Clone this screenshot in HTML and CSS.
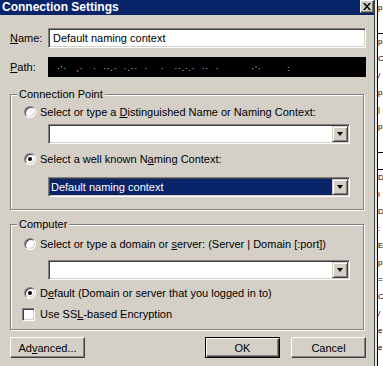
FILE: index.html
```html
<!DOCTYPE html>
<html>
<head>
<meta charset="utf-8">
<link rel="stylesheet" href="styles.css">
</head>
<body>
<div class="screen">
  <div class="dialog">
    <div class="titlebar">
      <span class="title">Connection Settings</span>
      <span class="close"><svg width="8" height="7" viewBox="0 0 8 7"><path d="M0 0h2l2 2.5L6 0h2L5 3.5 8 7H6L4 4.5 2 7H0l3-3.5z" fill="#000"/></svg></span>
    </div>
    <div class="body">
      <div class="field">
        <span class="lbl"><u>N</u>ame:</span>
        <div class="input">Default naming context</div>
      </div>
      <div class="field field-path">
        <span class="lbl"><u>P</u>ath:</span>
        <div class="input path"><span class="specks">·'·   ,·   ·  ··.·  ·.··  ·    ·   ··.·.·  ··  ·          ·'·        :</span></div>
      </div>

      <fieldset class="group g1">
        <legend>Connection Point</legend>
        <div class="opt opt1"><span class="radio"></span><span class="txt">Select or type a <u>D</u>istinguished Name or Naming Context:</span></div>
        <div class="combo c1"><div class="combo-val"></div><div class="combo-btn"><span class="tri"></span></div></div>
        <div class="opt opt2"><span class="radio on"></span><span class="txt">Select a well known N<u>a</u>ming Context:</span></div>
        <div class="combo c2"><div class="combo-val sel">Default naming context</div><div class="combo-btn"><span class="tri"></span></div></div>
      </fieldset>

      <fieldset class="group g2">
        <legend>Computer</legend>
        <div class="opt opt3"><span class="radio"></span><span class="txt">Select or type a domain or <u>s</u>erver: (Server | Domain [:port])</span></div>
        <div class="combo c3"><div class="combo-val"></div><div class="combo-btn"><span class="tri"></span></div></div>
        <div class="opt opt4"><span class="radio on"></span><span class="txt">D<u>e</u>fault (Domain or server that you logged in to)</span></div>
        <div class="opt opt5"><span class="check"></span><span class="txt">Use SS<u>L</u>-based Encryption</span></div>
      </fieldset>

      <div class="buttons">
        <div class="btn"><span>Ad<u>v</u>anced...</span></div>
        <div class="spacer"></div>
        <div class="btn default"><span>OK</span></div>
        <div class="btn"><span>Cancel</span></div>
      </div>
    </div>
  </div>
  <div class="strip">
    <div class="sl">p</div>
    <div class="sl rule"></div>
    <div class="sl">p</div>
    <div class="sl">C</div>
    <div class="sl">/</div>
    <div class="sl">p</div>
    <div class="sl">|</div>
    <div class="sl">p</div>
    <div class="sl rule"></div>
    <div class="sl rule"></div>
    <div class="sl">D</div>
    <div class="sl">i</div>
    <div class="sl">D</div>
    <div class="sl">:</div>
    <div class="sl">E</div>
    <div class="sl">p</div>
    <div class="sl">=</div>
    <div class="sl">C</div>
    <div class="sl">/</div>
    <div class="sl">e</div>
    <div class="sl">e</div>
  </div>
</div>
</body>
</html>
```

FILE: styles.css
```css
html, body {
  margin: 0;
  padding: 0;
  background: #fff;
}
body {
  font-family: "Liberation Sans", Arial, sans-serif;
  font-size: 11px;
  color: #000;
}
u { text-decoration: underline; text-underline-offset: 1px; }

.screen {
  display: flex;
  width: 383px;
  height: 366px;
  overflow: hidden;
}
.dialog {
  width: 374px;
  flex: none;
  background: #d4d0c8;
  border-right: 1px solid #404040;
  display: flex;
  flex-direction: column;
}
.titlebar {
  height: 15px;
  flex: none;
  background: #0a246a;
  display: flex;
  align-items: flex-start;
  justify-content: space-between;
  padding-left: 2px;
}
.title {
  color: #fff;
  font-weight: bold;
  font-size: 12px;
  line-height: 14px;
}
.close {
  width: 12px;
  height: 11px;
  background: #d4d0c8;
  border: 1px solid;
  border-color: #fff #404040 #404040 #fff;
  box-shadow: inset -1px -1px 0 #808080;
  display: flex;
  align-items: center;
  justify-content: center;
}

.body {
  padding: 0 8px 0 10px;
  display: flex;
  flex-direction: column;
}
.field {
  display: flex;
  align-items: center;
  margin-top: 13px;
  height: 20px;
}
.field-path { margin-top: 9px; }
.lbl {
  width: 38px;
  flex: none;
}
.input {
  box-sizing: border-box;
  width: 319px;
  height: 20px;
  background: #fff;
  border: 1px solid;
  border-color: #808080 #fff #fff #808080;
  box-shadow: inset 1px 1px 0 #404040, inset -1px -1px 0 #d4d0c8;
  padding: 0 4px;
  line-height: 18px;
  white-space: nowrap;
  overflow: hidden;
}
.path {
  background: #000;
  box-shadow: none;
  border-color: #000;
}
.specks {
  color: #fff;
  font-size: 8px;
  letter-spacing: 1px;
  white-space: pre;
  padding-left: 4px;
}

.group {
  margin: 0;
  padding: 0 0 12px 0;
  border: 1px solid #808080;
  box-shadow: inset 1px 1px 0 #fff, 1px 1px 0 #fff;
  width: 354px;
  box-sizing: border-box;
  min-width: 0;
}
.g1 { margin-top: 11px; }
.g2 { margin-top: 8px; padding-bottom: 8px; }
legend {
  padding: 0 2px;
  margin-left: 6px;
  line-height: 13px;
  background: #d4d0c8;
}

.opt {
  display: flex;
  align-items: center;
  height: 14px;
  white-space: nowrap;
}
.txt { white-space: pre; }
.opt1 { margin-top: 4px; }
.opt2 { margin-top: 8px; }
.opt3 { margin-top: 6px; }
.opt4 { margin-top: 6px; }
.opt5 { margin-top: 7px; }

.radio {
  width: 12px;
  height: 12px;
  margin-left: 13px;
  margin-right: 4px;
  box-sizing: border-box;
  border-radius: 50%;
  border: 1px solid;
  border-color: #808080 #fff #fff #808080;
  background: #fff;
  box-shadow: inset 1px 1px 0 #404040, inset -1px -1px 0 #d4d0c8;
  display: flex;
  align-items: center;
  justify-content: center;
  flex: none;
}
.radio.on::after {
  content: "";
  width: 4px;
  height: 4px;
  border-radius: 50%;
  background: #000;
}
.check {
  width: 13px;
  height: 13px;
  margin-left: 11px;
  margin-right: 5px;
  box-sizing: border-box;
  border: 1px solid;
  border-color: #808080 #fff #fff #808080;
  background: #fff;
  box-shadow: inset 1px 1px 0 #404040, inset -1px -1px 0 #d4d0c8;
  flex: none;
}

.combo {
  box-sizing: border-box;
  width: 302px;
  height: 20px;
  margin-left: 37px;
  background: #fff;
  border: 1px solid;
  border-color: #808080 #fff #fff #808080;
  box-shadow: inset 1px 1px 0 #404040, inset -1px -1px 0 #d4d0c8;
  padding: 1px;
  display: flex;
}
.c1 { margin-top: 5px; }
.c2 { margin-top: 11px; }
.c3 { margin-top: 9px; }
.combo-val {
  flex: 1;
  line-height: 16px;
  padding-left: 1px;
  white-space: nowrap;
}
.combo-val.sel {
  background: #0a246a;
  color: #fff;
}
.combo-btn {
  width: 16px;
  height: 16px;
  box-sizing: border-box;
  background: #d4d0c8;
  border: 1px solid;
  border-color: #d4d0c8 #404040 #404040 #d4d0c8;
  box-shadow: inset 1px 1px 0 #fff, inset -1px -1px 0 #808080;
  display: flex;
  align-items: center;
  justify-content: center;
  flex: none;
}
.tri {
  width: 0;
  height: 0;
  border-left: 3.5px solid transparent;
  border-right: 3.5px solid transparent;
  border-top: 4px solid #000;
}

.buttons {
  display: flex;
  margin-top: 7px;
  width: 356px;
}
.spacer { flex: 1; }
.btn {
  box-sizing: border-box;
  width: 75px;
  height: 21px;
  border: 1px solid;
  border-color: #fff #404040 #404040 #fff;
  box-shadow: inset -1px -1px 0 #808080;
  display: flex;
  align-items: center;
  justify-content: center;
  flex: none;
}
.btn.default {
  border: 1px solid #000;
  box-shadow: inset 1px 1px 0 #fff, inset -1px -1px 0 #404040, inset -2px -2px 0 #808080;
  margin-right: 11px;
}

.strip {
  flex: 1;
  background: #fff;
  border-left: 2px solid #e8e8e8;
  box-shadow: inset 1px 0 0 #000;
  overflow: hidden;
}
.sl {
  height: 17px;
  line-height: 15px;
  padding-left: 1px;
  font-size: 8px;
  white-space: nowrap;
}
.sl.rule {
  box-sizing: border-box;
  border-bottom: 1px solid #000;
}
```
